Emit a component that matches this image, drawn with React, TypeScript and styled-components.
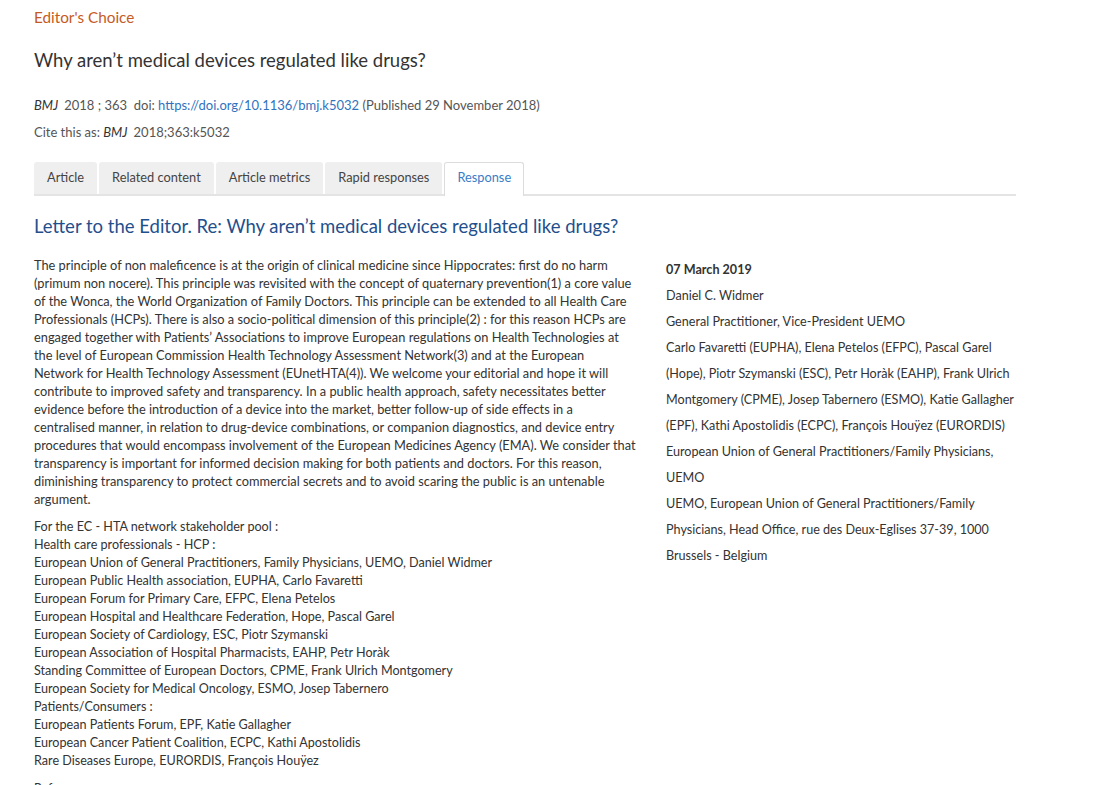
import React from "react";
import styled, { createGlobalStyle } from "styled-components";

const Global = createGlobalStyle`
  html, body { margin: 0; padding: 0; background: #fff; }
  body { font-family: Lato, "Open Sans", sans-serif; color: #333; overflow: hidden; }
`;

const Page = styled.div`
  width: 982px;
  padding: 8px 0 0 34px;
`;

const Kicker = styled.div`
  color: #c65a25;
  font-size: 15.3px;
  line-height: 18px;
`;

const Title = styled.h1`
  margin: 21px 0 0;
  font-size: 18.5px;
  font-weight: 400;
  line-height: 26px;
  color: #333;
`;

const Meta = styled.div`
  margin-top: 23px;
  font-size: 13px;
  line-height: 18px;
  color: #555;
`;

const Cite = styled(Meta)`
  margin-top: 9px;
`;

const Journal = styled.i`
  color: #333;
  margin-right: 6px;
`;

const Link = styled.a`
  color: #2f73c0;
  text-decoration: none;
`;

const Tabs = styled.div`
  margin-top: 21px;
  display: flex;
  align-items: flex-end;
  gap: 2px;
  border-bottom: 2px solid #e4e4e4;
`;

const Tab = styled.div<{ $active?: boolean }>`
  box-sizing: border-box;
  height: ${p => (p.$active ? "34px" : "32px")};
  margin-bottom: ${p => (p.$active ? "-2px" : "0")};
  padding: 0 12px ${p => (p.$active ? "6px" : "4px")};
  display: flex;
  align-items: center;
  font-size: 12.8px;
  border-radius: 3px 3px 0 0;
  background: ${p => (p.$active ? "#fff" : "#efefef")};
  color: ${p => (p.$active ? "#3a7cc7" : "#444")};
  border: 1px solid ${p => (p.$active ? "#dcdcdc" : "transparent")};
  border-bottom: none;
`;

const Heading = styled.h2`
  margin: 17px 0 0;
  font-size: 18.5px;
  font-weight: 400;
  line-height: 26px;
  color: #1f4f8c;
`;

const Columns = styled.div`
  display: flex;
  gap: 26px;
  margin-top: 17px;
`;

const Main = styled.div`
  width: 606px;
  flex: none;
  line-height: 18px;
  color: #333;
`;

const Para = styled.p<{ $size?: number }>`
  margin: 0 0 10px;
  font-size: ${p => p.$size ?? 12.6}px;
`;

const Line = styled.span`
  display: block;
  white-space: nowrap;
`;

const Side = styled.div`
  width: 350px;
  flex: none;
  padding-top: 1px;
  font-size: 12.6px;
  line-height: 26px;
  color: #333;
`;

const DateLine = styled(Line)`
  font-weight: 700;
`;

const paragraph = [
  "The principle of non maleficence is at the origin of clinical medicine since Hippocrates: first do no harm",
  "(primum non nocere). This principle was revisited with the concept of quaternary prevention(1) a core value",
  "of the Wonca, the World Organization of Family Doctors. This principle can be extended to all Health Care",
  "Professionals (HCPs). There is also a socio-political dimension of this principle(2) : for this reason HCPs are",
  "engaged together with Patients’ Associations to improve European regulations on Health Technologies at",
  "the level of European Commission Health Technology Assessment Network(3) and at the European",
  "Network for Health Technology Assessment (EUnetHTA(4)). We welcome your editorial and hope it will",
  "contribute to improved safety and transparency. In a public health approach, safety necessitates better",
  "evidence before the introduction of a device into the market, better follow-up of side effects in a",
  "centralised manner, in relation to drug-device combinations, or companion diagnostics, and device entry",
  "procedures that would encompass involvement of the European Medicines Agency (EMA). We consider that",
  "transparency is important for informed decision making for both patients and doctors. For this reason,",
  "diminishing transparency to protect commercial secrets and to avoid scaring the public is an untenable",
  "argument.",
];

const list = [
  "For the EC - HTA network stakeholder pool :",
  "Health care professionals - HCP :",
  "European Union of General Practitioners, Family Physicians, UEMO, Daniel Widmer",
  "European Public Health association, EUPHA, Carlo Favaretti",
  "European Forum for Primary Care, EFPC, Elena Petelos",
  "European Hospital and Healthcare Federation, Hope, Pascal Garel",
  "European Society of Cardiology, ESC, Piotr Szymanski",
  "European Association of Hospital Pharmacists, EAHP, Petr Horàk",
  "Standing Committee of European Doctors, CPME, Frank Ulrich Montgomery",
  "European Society for Medical Oncology, ESMO, Josep Tabernero",
  "Patients/Consumers :",
  "European Patients Forum, EPF, Katie Gallagher",
  "European Cancer Patient Coalition, ECPC, Kathi Apostolidis",
  "Rare Diseases Europe, EURORDIS, François Houÿez",
];

const side = [
  "Daniel C. Widmer",
  "General Practitioner, Vice-President UEMO",
  "Carlo Favaretti (EUPHA), Elena Petelos (EFPC), Pascal Garel",
  "(Hope), Piotr Szymanski (ESC), Petr Horàk (EAHP), Frank Ulrich",
  "Montgomery (CPME), Josep Tabernero (ESMO), Katie Gallagher",
  "(EPF), Kathi Apostolidis (ECPC), François Houÿez (EURORDIS)",
  "European Union of General Practitioners/Family Physicians,",
  "UEMO",
  "UEMO, European Union of General Practitioners/Family",
  "Physicians, Head Office, rue des Deux-Eglises 37-39, 1000",
  "Brussels - Belgium",
];

export default function App() {
  return (
    <Page>
      <Global />
      <Kicker>Editor's Choice</Kicker>
      <Title>Why aren’t medical devices regulated like drugs?</Title>
      <Meta>
        <Journal>BMJ</Journal>2018 ; 363&nbsp; doi: <Link href="#">https://doi.org/10.1136/bmj.k5032</Link> (Published 29 November 2018)
      </Meta>
      <Cite>
        Cite this as: <Journal>BMJ</Journal>2018;363:k5032
      </Cite>
      <Tabs>
        <Tab>Article</Tab>
        <Tab>Related content</Tab>
        <Tab>Article metrics</Tab>
        <Tab>Rapid responses</Tab>
        <Tab $active>Response</Tab>
      </Tabs>
      <Heading>Letter to the Editor. Re: Why aren’t medical devices regulated like drugs?</Heading>
      <Columns>
        <Main>
          <Para $size={12.8}>
            {paragraph.map((l, i) => (
              <Line key={i}>{l}</Line>
            ))}
          </Para>
          <Para>
            {list.map((l, i) => (
              <Line key={i}>{l}</Line>
            ))}
          </Para>
          <Para>References</Para>
        </Main>
        <Side>
          <DateLine>07 March 2019</DateLine>
          {side.map((l, i) => (
            <Line key={i}>{l}</Line>
          ))}
        </Side>
      </Columns>
    </Page>
  );
}
